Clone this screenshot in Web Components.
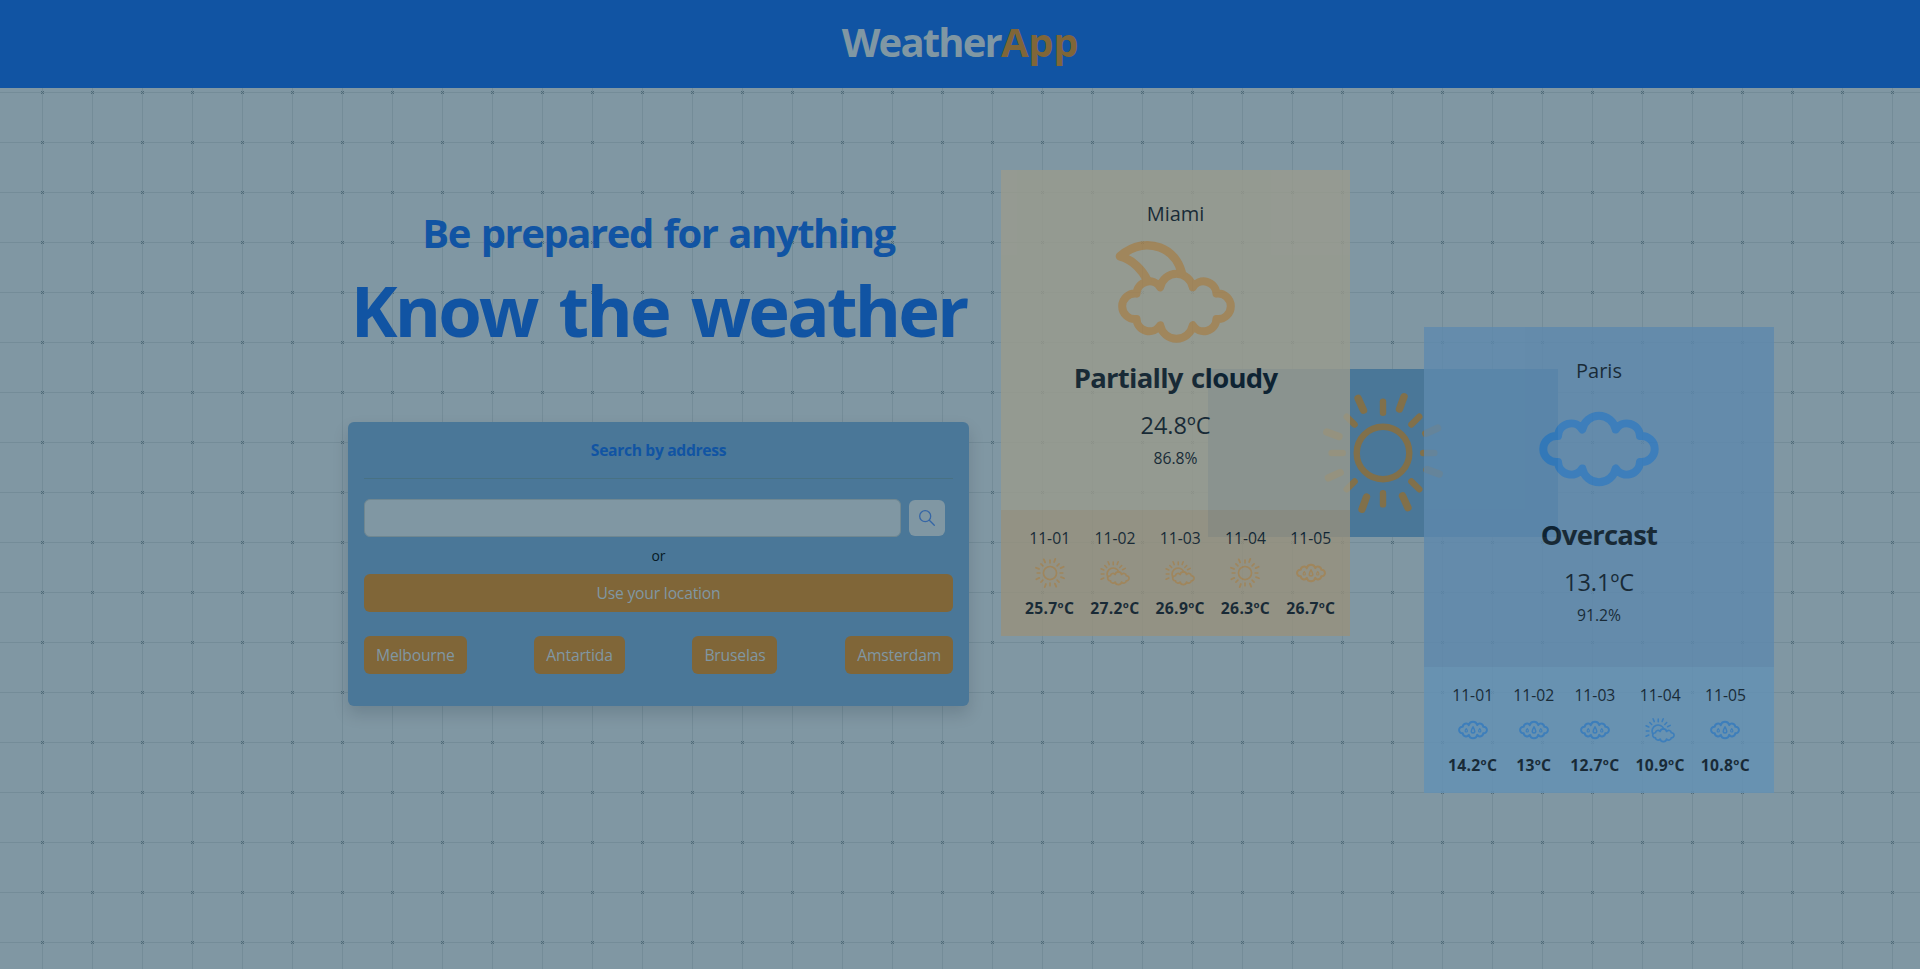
<!DOCTYPE html>
<html lang="en">
<head>
<meta charset="utf-8">
<title>WeatherApp</title>
<style>
html,body{margin:0;height:100%;overflow:hidden}
body{font-family:"Open Sans","Noto Sans",sans-serif;color:#0a1c28;background:#8097a3}
</style>
</head>
<body>
<weather-app></weather-app>
<script>
const CLOUD = 'M-41 13A13.1 13.1 0 1 1-41-13A13.2 13.2 0 0 1-16.7-19.5A17 17 0 0 1 16.7-19.5A13.2 13.2 0 0 1 41-13A13.1 13.1 0 1 1 41 13A13.2 13.2 0 0 1 16.7 19.5A17 17 0 0 1-16.7 19.5A13.2 13.2 0 0 1-41 13Z';
const ray = (cx, cy, a, r1, r2, w) => {
  const t = a * Math.PI / 180, c = Math.cos(t), s = Math.sin(t);
  return `<path stroke-width="${w}" d="M${(cx + c * r1).toFixed(1)} ${(cy + s * r1).toFixed(1)}L${(cx + c * r2).toFixed(1)} ${(cy + s * r2).toFixed(1)}"/>`;
};
const shapes = {
  sun() {
    let s = '<circle r="26.3" stroke-width="6.4"/>';
    for (let a = 0; a < 360; a += 45) s += ray(0, 0, a, 40.2, 51.4, 6.4);
    for (const b of [20.5, 65.5]) for (let a = b; a < 360; a += 90) s += ray(0, 0, a, 47, 60, 7.4);
    return s;
  },
  overcast: () => `<path stroke-width="8" d="${CLOUD}"/>`,
  rain: () => `<path stroke-width="8" d="${CLOUD}"/>
    <path stroke-width="6" d="M0-13C4-6 7 0 7 5A7 7 0 0 1-7 5C-7 0-4-6 0-13Z"/>
    <path stroke-width="4.500" d="M-27-6C-24-2-22.500 1-22.500 3.500A4.500 4.500 0 0 1-31.500 3.500C-31.500 1-30-2-27-6ZM27-6C30-2 31.500 1 31.500 3.500A4.500 4.500 0 0 1 22.500 3.500C22.500 1 24-2 27-6Z"/>`,
  night: () => `<path stroke-width="8.200" transform="translate(.500 14.300) scale(.975)" d="${CLOUD}"/>
    <path stroke-width="8.600" d="M-28.500-11.500C-33-21-43-32.500-56-35.700C-42-48-27-48.500-16-44.500C-5-40.500 2.500-31 5.500-20"/>`,
  partly() {
    let s = `<path stroke-width="8.500" transform="translate(13.500 21) scale(.767)" d="${CLOUD}"/><path stroke-width="6.500" d="M-30 14A23 23 0 0 1 15-5"/>`;
    for (const a of [180, 225, 270, 315]) s += ray(-7, 4, a, 37, 48, 6.2);
    for (const a of [157, 203, 247, 292, 335]) s += ray(-7, 4, a, 41, 53, 6.2);
    return s;
  }
};

class WeatherIcon extends HTMLElement {
  connectedCallback() {
    const r = this.attachShadow({ mode: 'open' });
    r.innerHTML = `<style>:host{display:block;width:120px;height:120px}svg{display:block;width:100%;height:100%;overflow:visible}</style>
      <svg viewBox="-60 -60 120 120" fill="none" stroke="currentColor" stroke-linecap="round" stroke-linejoin="round">${shapes[this.getAttribute('name')]()}</svg>`;
  }
}
customElements.define('weather-icon', WeatherIcon);

class GridBackdrop extends HTMLElement {
  connectedCallback() {
    this.attachShadow({ mode: 'open' }).innerHTML = `<style>:host{position:absolute;inset:0;z-index:-1}svg{display:block;width:100%;height:100%}</style>
      <svg shape-rendering="crispEdges"><defs><pattern id="g" x="17" y="17" width="50" height="50" patternUnits="userSpaceOnUse">
      <path fill="#748c98" d="M25 0h1v50h-1zM0 25h50v1H0z"/>
      <path fill="#506b79" d="M24 24h1v1h-1zM26 24h1v1h-1zM25 25h1v1h-1zM24 26h1v1h-1zM26 26h1v1h-1z"/>
      </pattern></defs><rect width="100%" height="100%" fill="url(#g)"/></svg>`;
  }
}
customElements.define('grid-backdrop', GridBackdrop);

class AppHeader extends HTMLElement {
  connectedCallback() {
    this.attachShadow({ mode: 'open' }).innerHTML = `<style>
      :host{display:flex;justify-content:center;align-items:center;box-sizing:border-box;height:88px;padding-bottom:5px;background:#1154a3;color:#8097a3}
      h1{margin:0;font-size:40px;line-height:48px;font-weight:700;letter-spacing:-1.800px}
      span{color:#806638;letter-spacing:-.300px}</style>
      <h1>Weather<span>App</span></h1>`;
  }
}
customElements.define('app-header', AppHeader);

class CityButton extends HTMLElement {
  connectedCallback() {
    this.attachShadow({ mode: 'open' }).innerHTML = `<style>
      :host{display:block}
      button{display:block;width:100%;height:38px;border:0;border-radius:6px;padding:0 12px;background:#806638;color:#8097a3;font:400 15.700px/24px "Open Sans","Noto Sans",sans-serif;white-space:nowrap;letter-spacing:-.200px}
      </style><button><slot></slot></button>`;
  }
}
customElements.define('city-button', CityButton);

class SearchPanel extends HTMLElement {
  connectedCallback() {
    this.attachShadow({ mode: 'open' }).innerHTML = `<style>
      :host{display:block;box-sizing:border-box;width:621px;height:284px;padding:16px;border-radius:6px;background:#4a7798;box-shadow:0 8px 16px rgba(0,20,35,.15)}
      h2{margin:0;font-size:15.700px;line-height:24px;font-weight:700;letter-spacing:-.350px;text-align:center;color:#1154a3}
      hr{margin:16px 0 20px;border:0;height:1px;background:#487183}
      .row{display:flex;align-items:center;gap:8px}
      input{box-sizing:border-box;width:537px;height:38px;border:1px solid #6f8791;border-radius:6px;background:#8097a3;padding:0 12px}
      .go{display:grid;place-items:center;width:36px;height:36px;border:0;border-radius:6px;padding:0;background:#8097a3;color:#3566a6}
      p{margin:8px 0;font-size:14px;line-height:21px;text-align:center;color:#071a25}
      .cities{display:flex;justify-content:space-between;margin-top:24px}
      </style>
      <h2>Search by address</h2><hr>
      <div class="row"><input aria-label="Address"><button class="go" aria-label="Search">
      <svg width="16" height="16" viewBox="0 0 16 16" fill="none" stroke="currentColor" stroke-width="1.300" stroke-linecap="round"><circle cx="6.200" cy="6.200" r="5.500"/><path d="M10.300 10.300L15.300 15.300"/></svg></button></div>
      <p>or</p>
      <city-button>Use your location</city-button>
      <div class="cities"><city-button>Melbourne</city-button><city-button>Antartida</city-button><city-button>Bruselas</city-button><city-button>Amsterdam</city-button></div>`;
  }
}
customElements.define('search-panel', SearchPanel);

class DayForecast extends HTMLElement {
  connectedCallback() {
    const g = n => this.getAttribute(n);
    this.attachShadow({ mode: 'open' }).innerHTML = `<style>
      :host{display:flex;flex-direction:column;align-items:center;flex:none;white-space:nowrap}
      .d{font-size:15.700px;font-weight:400;line-height:24px}
      weather-icon{width:30px;height:30px;margin:8px 0;color:var(--icon)}
      .t{font-size:15.700px;font-weight:700;line-height:24px;letter-spacing:.300px}
      </style><span class="d">${g('date')}</span><weather-icon name="${g('icon')}"></weather-icon><span class="t">${g('temp')}</span>`;
  }
}
customElements.define('day-forecast', DayForecast);

class WeatherCard extends HTMLElement {
  connectedCallback() {
    const g = n => this.getAttribute(n);
    this.attachShadow({ mode: 'open' }).innerHTML = `<style>
      :host{display:block;width:350px;opacity:.8;background:var(--top);color:#000f1b;text-align:center}
      .now{height:340px;display:flex;flex-direction:column;align-items:center}
      .city{margin-top:30px;font-size:20px;line-height:28px;font-weight:500}
      weather-icon{margin-top:4px;color:var(--icon)}
      .sky{margin:5px 0 0;font-size:27.500px;line-height:42px;font-weight:700;letter-spacing:-.750px;word-spacing:2px}
      .temp{margin-top:8px;font-size:23.500px;line-height:36px;font-weight:400}
      .hum{margin-top:3px;font-size:15.700px;line-height:24px;font-weight:400}
      .days{box-sizing:border-box;height:125.700px;padding:16px 24px 0;display:flex;gap:16px;background:var(--bottom)}
      </style><div class="now"><div class="city">${g('city')}</div><weather-icon name="${g('icon')}"></weather-icon>
      <h3 class="sky">${g('sky')}</h3><div class="temp">${g('temp')}</div><div class="hum">${g('humidity')}</div></div>
      <div class="days"><slot></slot></div>`;
  }
}
customElements.define('weather-card', WeatherCard);

class WeatherApp extends HTMLElement {
  connectedCallback() {
    this.attachShadow({ mode: 'open' }).innerHTML = `<style>
      :host{display:block;position:relative;height:969px;overflow:hidden;isolation:isolate}
      main{display:flex;align-items:flex-start;gap:32px;padding-left:348px}
      .intro{width:621px;text-align:center;color:#1154a3;white-space:nowrap}
      .lead{margin:121px 0 0;font-size:40px;line-height:48px;font-weight:700;letter-spacing:-1.450px;word-spacing:1.800px}
      .title{margin:9px 0 67px;font-size:70.500px;line-height:89px;font-weight:700;letter-spacing:-2.800px;word-spacing:6.500px}
      .cards{display:grid;justify-items:start;align-items:start}
      .cards>*{grid-area:1/1}
      .mid{display:grid;place-items:center;width:350px;height:168px;margin:281px 0 0 207px;background:#4a7798;color:#81704a}
      .miami{width:349px;margin-top:82px;--top:rgb(154,155,141);--bottom:rgb(152,145,125);--icon:rgb(168,130,75)}
      .paris{margin:239px 0 0 423px;--top:rgb(94,137,174);--bottom:rgb(99,145,181);--icon:rgb(45,121,193)}
      </style>
      <grid-backdrop></grid-backdrop>
      <app-header></app-header>
      <main><section class="intro"><h2 class="lead">Be prepared for anything</h2><h1 class="title">Know the weather</h1><search-panel></search-panel></section>
      <section class="cards">
      <div class="mid"><weather-icon name="sun"></weather-icon></div>
      <weather-card class="miami" city="Miami" icon="night" sky="Partially cloudy" temp="24.8ºC" humidity="86.8%">
      <day-forecast date="11-01" icon="sun" temp="25.7ºC"></day-forecast><day-forecast date="11-02" icon="partly" temp="27.2ºC"></day-forecast><day-forecast date="11-03" icon="partly" temp="26.9ºC"></day-forecast><day-forecast date="11-04" icon="sun" temp="26.3ºC"></day-forecast><day-forecast date="11-05" icon="rain" temp="26.7ºC"></day-forecast></weather-card>
      <weather-card class="paris" city="Paris" icon="overcast" sky="Overcast" temp="13.1ºC" humidity="91.2%">
      <day-forecast date="11-01" icon="rain" temp="14.2ºC"></day-forecast><day-forecast date="11-02" icon="rain" temp="13ºC"></day-forecast><day-forecast date="11-03" icon="rain" temp="12.7ºC"></day-forecast><day-forecast date="11-04" icon="partly" temp="10.9ºC"></day-forecast><day-forecast date="11-05" icon="rain" temp="10.8ºC"></day-forecast></weather-card>
      </section></main>`;
  }
}
customElements.define('weather-app', WeatherApp);
</script>
</body>
</html>
